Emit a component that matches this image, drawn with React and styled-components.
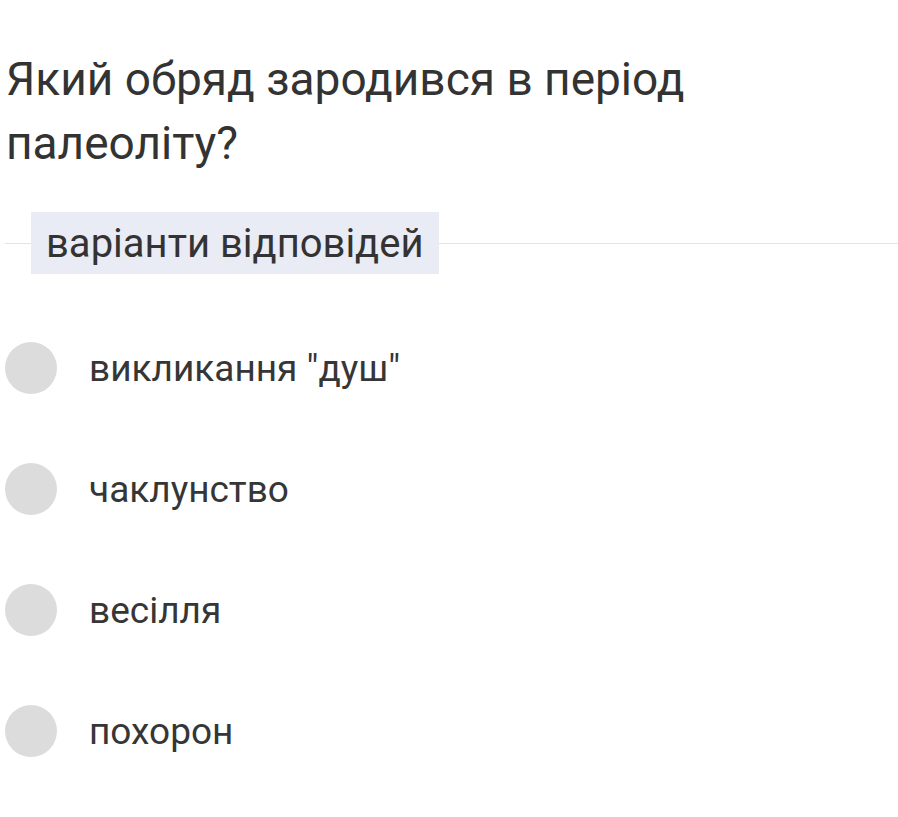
import React from "react";
import styled, { createGlobalStyle } from "styled-components";

const Global = createGlobalStyle`
  html, body { margin: 0; padding: 0; background: #ffffff; }
  body { font-family: Roboto, "Noto Sans", sans-serif; color: #333333; }
`;

const Page = styled.div`
  display: flex;
  flex-direction: column;
  padding: 47px 0 0 0;
`;

const Question = styled.h1`
  margin: 0;
  padding: 0 0 0 6px;
  font-size: 46px;
  font-weight: 400;
  line-height: 64px;
  color: #333333;
  max-width: 760px;
`;

const Divider = styled.div`
  display: flex;
  align-items: center;
  margin-top: 37px;
  padding-left: 5px;
`;

const Rule = styled.div`
  height: 1px;
  background: #e3e3e3;
  flex: ${(p) => (p.$grow ? 1 : "0 0 26px")};
`;

const Legend = styled.div`
  background: #e9ebf5;
  padding: 0 15px;
  height: 62px;
  display: flex;
  align-items: center;
  font-size: 40px;
  color: #333333;
`;

const Options = styled.div`
  display: flex;
  flex-direction: column;
  gap: 69px;
  margin-top: 68px;
  padding-left: 5px;
`;

const Option = styled.label`
  display: flex;
  align-items: center;
  gap: 32px;
  height: 52px;
  font-size: 37px;
  color: #363636;
`;

const Radio = styled.span`
  width: 52px;
  height: 52px;
  border-radius: 50%;
  background: #dcdcdc;
  flex: 0 0 auto;
`;

const options = ['викликання "душ"', "чаклунство", "весілля", "похорон"];

export default function App() {
  return (
    <Page>
      <Global />
      <Question>Який обряд зародився в період палеоліту?</Question>
      <Divider>
        <Rule />
        <Legend>варіанти відповідей</Legend>
        <Rule $grow />
      </Divider>
      <Options>
        {options.map((o) => (
          <Option key={o}>
            <Radio />
            {o}
          </Option>
        ))}
      </Options>
    </Page>
  );
}
